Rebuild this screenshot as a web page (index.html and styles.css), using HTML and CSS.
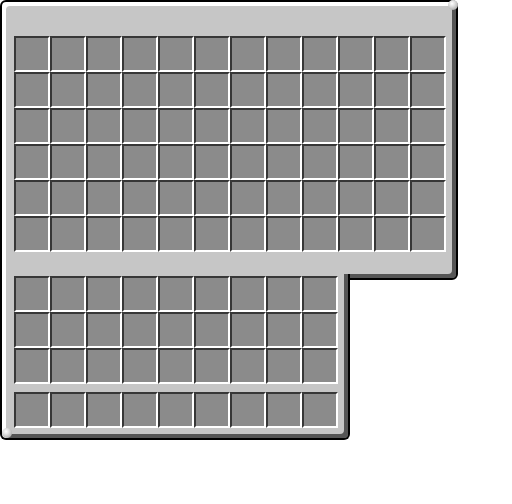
FILE: index.html
```html
<!DOCTYPE html>
<html>
<head>
<meta charset="utf-8">
<link rel="stylesheet" href="styles.css">
</head>
<body>
<div class="gui">
  <div class="panel top">
    <div class="grid grid12">
      <div class="slot"></div><div class="slot"></div><div class="slot"></div><div class="slot"></div><div class="slot"></div><div class="slot"></div><div class="slot"></div><div class="slot"></div><div class="slot"></div><div class="slot"></div><div class="slot"></div><div class="slot"></div>
      <div class="slot"></div><div class="slot"></div><div class="slot"></div><div class="slot"></div><div class="slot"></div><div class="slot"></div><div class="slot"></div><div class="slot"></div><div class="slot"></div><div class="slot"></div><div class="slot"></div><div class="slot"></div>
      <div class="slot"></div><div class="slot"></div><div class="slot"></div><div class="slot"></div><div class="slot"></div><div class="slot"></div><div class="slot"></div><div class="slot"></div><div class="slot"></div><div class="slot"></div><div class="slot"></div><div class="slot"></div>
      <div class="slot"></div><div class="slot"></div><div class="slot"></div><div class="slot"></div><div class="slot"></div><div class="slot"></div><div class="slot"></div><div class="slot"></div><div class="slot"></div><div class="slot"></div><div class="slot"></div><div class="slot"></div>
      <div class="slot"></div><div class="slot"></div><div class="slot"></div><div class="slot"></div><div class="slot"></div><div class="slot"></div><div class="slot"></div><div class="slot"></div><div class="slot"></div><div class="slot"></div><div class="slot"></div><div class="slot"></div>
      <div class="slot"></div><div class="slot"></div><div class="slot"></div><div class="slot"></div><div class="slot"></div><div class="slot"></div><div class="slot"></div><div class="slot"></div><div class="slot"></div><div class="slot"></div><div class="slot"></div><div class="slot"></div>
    </div>
  </div>
  <div class="panel bottom">
    <div class="grid grid9">
      <div class="slot"></div><div class="slot"></div><div class="slot"></div><div class="slot"></div><div class="slot"></div><div class="slot"></div><div class="slot"></div><div class="slot"></div><div class="slot"></div>
      <div class="slot"></div><div class="slot"></div><div class="slot"></div><div class="slot"></div><div class="slot"></div><div class="slot"></div><div class="slot"></div><div class="slot"></div><div class="slot"></div>
      <div class="slot"></div><div class="slot"></div><div class="slot"></div><div class="slot"></div><div class="slot"></div><div class="slot"></div><div class="slot"></div><div class="slot"></div><div class="slot"></div>
    </div>
    <div class="grid grid9 hotbar">
      <div class="slot"></div><div class="slot"></div><div class="slot"></div><div class="slot"></div><div class="slot"></div><div class="slot"></div><div class="slot"></div><div class="slot"></div><div class="slot"></div>
    </div>
  </div>
</div>
</body>
</html>
```

FILE: styles.css
```css
html, body {
  margin: 0;
  padding: 0;
  background: #ffffff;
}

.gui {
  display: flex;
  flex-direction: column;
  align-items: flex-start;
}

.panel {
  box-sizing: border-box;
  background: #c6c6c6;
  border: 2px solid #000;
  position: relative;
}

.top {
  width: 458px;
  height: 280px;
  padding: 34px 10px 26px 12px;
  border-radius: 6px 6px 6px 0;
  box-shadow: inset 4px 4px 0 #ffffff, inset -4px -4px 0 #555555;
}

.top::after {
  content: "";
  position: absolute;
  top: -2px;
  right: -2px;
  width: 10px;
  height: 10px;
  border-radius: 50%;
  background: radial-gradient(circle at 40% 35%, #ffffff 0%, #e2e2e2 30%, #b4b4b4 70%, #8a8a8a 100%);
}

.bottom {
  width: 350px;
  margin-top: -6px;
  padding: 2px 10px 10px 12px;
  border-top: 0;
  border-radius: 0 0 6px 6px;
  box-shadow: inset 4px 0 0 #ffffff, inset -4px -4px 0 #555555;
}

.bottom::after {
  content: "";
  position: absolute;
  left: 0;
  bottom: 0;
  width: 10px;
  height: 10px;
  border-radius: 50%;
  background: radial-gradient(circle at 40% 35%, #ffffff 0%, #e2e2e2 30%, #b4b4b4 70%, #8a8a8a 100%);
}

.grid {
  display: grid;
}

.grid12 {
  grid-template-columns: repeat(12, 36px);
  grid-auto-rows: 36px;
}

.grid9 {
  grid-template-columns: repeat(9, 36px);
  grid-auto-rows: 36px;
}

.hotbar {
  margin-top: 8px;
}

.slot {
  box-sizing: border-box;
  width: 36px;
  height: 36px;
  background: #8b8b8b;
  border-style: solid;
  border-width: 2px;
  border-color: #373737 #ffffff #ffffff #373737;
}
```
